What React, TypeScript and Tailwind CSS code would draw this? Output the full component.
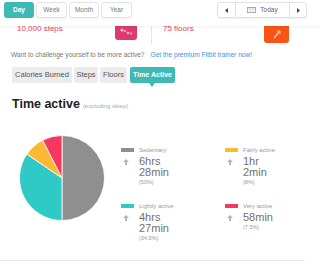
import React from 'react';

interface Slice {
  label: string;
  color: string;
  value: string[];
  pct: string;
}

const slices: Slice[] = [
  { label: 'Sedentary', color: 'bg-[#8f8f8f]', value: ['6hrs', '28min'], pct: '(50%)' },
  { label: 'Fairly active', color: 'bg-[#fdb933]', value: ['1hr', '2min'], pct: '(8%)' },
  { label: 'Lightly active', color: 'bg-[#2fcac6]', value: ['4hrs', '27min'], pct: '(34.5%)' },
  { label: 'Very active', color: 'bg-[#f6385f]', value: ['58min'], pct: '(7.5%)' },
];

const ArrowUp = () => (
  <svg width="6" height="6" viewBox="0 0 6 6" className="ml-[2px] mt-[7px]">
    <path d="M3 0 L6 3 L4 3 L4 6 L2 6 L2 3 L0 3 Z" fill="#b4b4b4" />
  </svg>
);

const LegendItem: React.FC<{ item: Slice }> = ({ item }) => (
  <div className="flex">
    <div className="w-[18px] shrink-0">
      <div className={`mt-[2px] h-[4px] w-[13px] ${item.color}`} />
      <ArrowUp />
    </div>
    <div>
      <div className="text-[6px] leading-[8px] text-[#9a9a9a]">{item.label}</div>
      <div className="mt-[1.5px] text-[11px] leading-[11px] text-[#707070]">
        {item.value.map((v) => (
          <div key={v}>{v}</div>
        ))}
      </div>
      <div className="mt-[1px] text-[5.5px] leading-[7px] text-[#9a9a9a]">{item.pct}</div>
    </div>
  </div>
);

const PieChart = () => (
  <svg width="86" height="86" viewBox="0 0 86 86">
    <path d="M43 43 L43 0.5 A42.5 42.5 0 0 1 43 85.5 Z" fill="#8f8f8f" stroke="#fff" strokeWidth="0.8" />
    <path d="M43 43 L43 85.5 A42.5 42.5 0 0 1 7.85 19.11 Z" fill="#2fcac6" stroke="#fff" strokeWidth="0.8" />
    <path d="M43 43 L7.85 19.11 A42.5 42.5 0 0 1 23.7 5.13 Z" fill="#fdb933" stroke="#fff" strokeWidth="0.8" />
    <path d="M43 43 L23.7 5.13 A42.5 42.5 0 0 1 43 0.5 Z" fill="#f6385f" stroke="#fff" strokeWidth="0.8" />
  </svg>
);

const App: React.FC = () => {
  const ranges = [
    { name: 'Day', w: 'w-[30px]' },
    { name: 'Week', w: 'w-[31px]' },
    { name: 'Month', w: 'w-[30px]' },
    { name: 'Year', w: 'w-[31px]' },
  ];
  const tabs = [
    { name: 'Calories Burned', w: 'w-[60px]' },
    { name: 'Steps', w: 'w-[24px]' },
    { name: 'Floors', w: 'w-[27px]' },
  ];

  return (
    <div className="h-[271px] w-[320px] overflow-hidden bg-white font-['Liberation_Sans',Arial,sans-serif]">
      {/* top bar */}
      <div className="relative z-10 flex h-[26px] items-start justify-between bg-white pl-[4px] pr-[13px] pt-[2px] shadow-[0_1px_2px_rgba(0,0,0,0.06)]">
        <div className="flex gap-[2px]">
          {ranges.map((r) => (
            <div
              key={r.name}
              className={`flex h-[16px] ${r.w} items-center justify-center rounded-[3px] text-[6.5px] ${
                r.name === 'Day'
                  ? 'bg-[#3fb9b5] font-bold text-white'
                  : 'border border-[#e4e4e4] bg-white text-[#777] shadow-[0_1px_1px_rgba(0,0,0,0.05)]'
              }`}
            >
              {r.name}
            </div>
          ))}
        </div>
        <div className="flex h-[16px] rounded-[3px] border border-[#e2e2e2] shadow-[0_1px_1px_rgba(0,0,0,0.06)]">
          <div className="flex w-[18px] items-center justify-center border-r border-[#e2e2e2]">
            <svg width="3" height="5" viewBox="0 0 3 5">
              <path d="M3 0 L0 2.5 L3 5 Z" fill="#444" />
            </svg>
          </div>
          <div className="flex w-[54px] items-center justify-center gap-[4px] border-r border-[#e2e2e2] text-[6.5px] text-[#666]">
            <svg width="9" height="6" viewBox="0 0 9 6">
              <rect x="0.5" y="0.5" width="8" height="5" fill="none" stroke="#aaa" strokeWidth="1" />
              <path d="M1 2 H8 M3 2 V5.5 M6 2 V5.5" stroke="#bbb" strokeWidth="0.6" />
            </svg>
            <span>Today</span>
          </div>
          <div className="flex w-[16px] items-center justify-center">
            <svg width="3" height="5" viewBox="0 0 3 5">
              <path d="M0 0 L3 2.5 L0 5 Z" fill="#444" />
            </svg>
          </div>
        </div>
      </div>

      {/* stats row, partly hidden under the bar */}
      <div className="flex h-[18px] w-[306px] overflow-hidden">
        <div className="flex w-[152px] items-start justify-between border-r border-[#e6e6e6] pl-[17px] pr-[14px]">
          <span className="mt-[-1px] text-[8px] leading-[8px] text-[#f03a68]">10,000 steps</span>
          <div className="flex h-[14px] w-[22px] items-start justify-center rounded-b-[3px] bg-[#dc3b6c] pt-[1px]">
            <svg width="14" height="10" viewBox="0 0 14 10">
              <circle cx="3" cy="3" r="1.6" fill="#f6b6c9" />
              <circle cx="6" cy="4" r="1.1" fill="#f6b6c9" />
              <circle cx="9" cy="6" r="1.3" fill="#f6b6c9" />
              <circle cx="12" cy="6.5" r="1.1" fill="#f6b6c9" />
            </svg>
          </div>
        </div>
        <div className="flex flex-1 items-start justify-between pl-[11px] pr-[17px]">
          <span className="mt-[-1px] text-[8px] leading-[8px] text-[#f03a68]">75 floors</span>
          <div className="flex h-[17px] w-[25px] items-start justify-center rounded-b-[3px] bg-[#f75415] pt-[2px]">
            <svg width="12" height="12" viewBox="0 0 12 12">
              <path d="M3 10 L9 3" stroke="#fcc2a6" strokeWidth="1.6" />
              <path d="M6 3 H9 V6" stroke="#fcc2a6" strokeWidth="1" fill="none" />
            </svg>
          </div>
        </div>
      </div>

      <div className="pl-[11px]">
        <p className="mt-[6.5px] text-[6.6px] leading-[8px] text-[#777]">
          Want to challenge yourself to be more active?
          <span className="ml-[6px] text-[#3f8fe2]">Get the premium Fitbit trainer now!</span>
        </p>

        <div className="ml-[1px] mt-[8.5px] flex gap-[2px]">
          {tabs.map((t) => (
            <div
              key={t.name}
              className={`flex h-[16px] ${t.w} items-center justify-center rounded-[2px] bg-[#ececec] text-[7.5px] text-[#555]`}
            >
              {t.name}
            </div>
          ))}
          <div className="relative ml-[1px] flex h-[16px] w-[45px] items-center justify-center rounded-[2px] bg-[#3fb9b5] text-[7px] font-bold text-white">
            Time Active
            <div className="absolute left-[19px] top-[16px] h-0 w-0 border-x-[3.5px] border-t-[4px] border-x-transparent border-t-[#3fb9b5]" />
          </div>
        </div>

        <div className="ml-[1px] mt-[13.5px] flex items-baseline gap-[3px] leading-[14px]">
          <span className="text-[12.5px] font-bold text-[#222]">Time active</span>
          <span className="text-[6px] text-[#aaa]">(excluding sleep)</span>
        </div>

        <div className="mt-[22.5px] flex items-start">
          <div className="ml-[8px] shrink-0">
            <PieChart />
          </div>
          <div className="ml-[16px] mt-[11px] grid grid-cols-[104px_80px] gap-y-[16.5px]">
            {slices.map((s) => (
              <LegendItem key={s.label} item={s} />
            ))}
          </div>
        </div>
      </div>

      <div className="mt-[18px] h-px w-[305px] bg-[#e8e8e8]" />
    </div>
  );
};

export default App;
